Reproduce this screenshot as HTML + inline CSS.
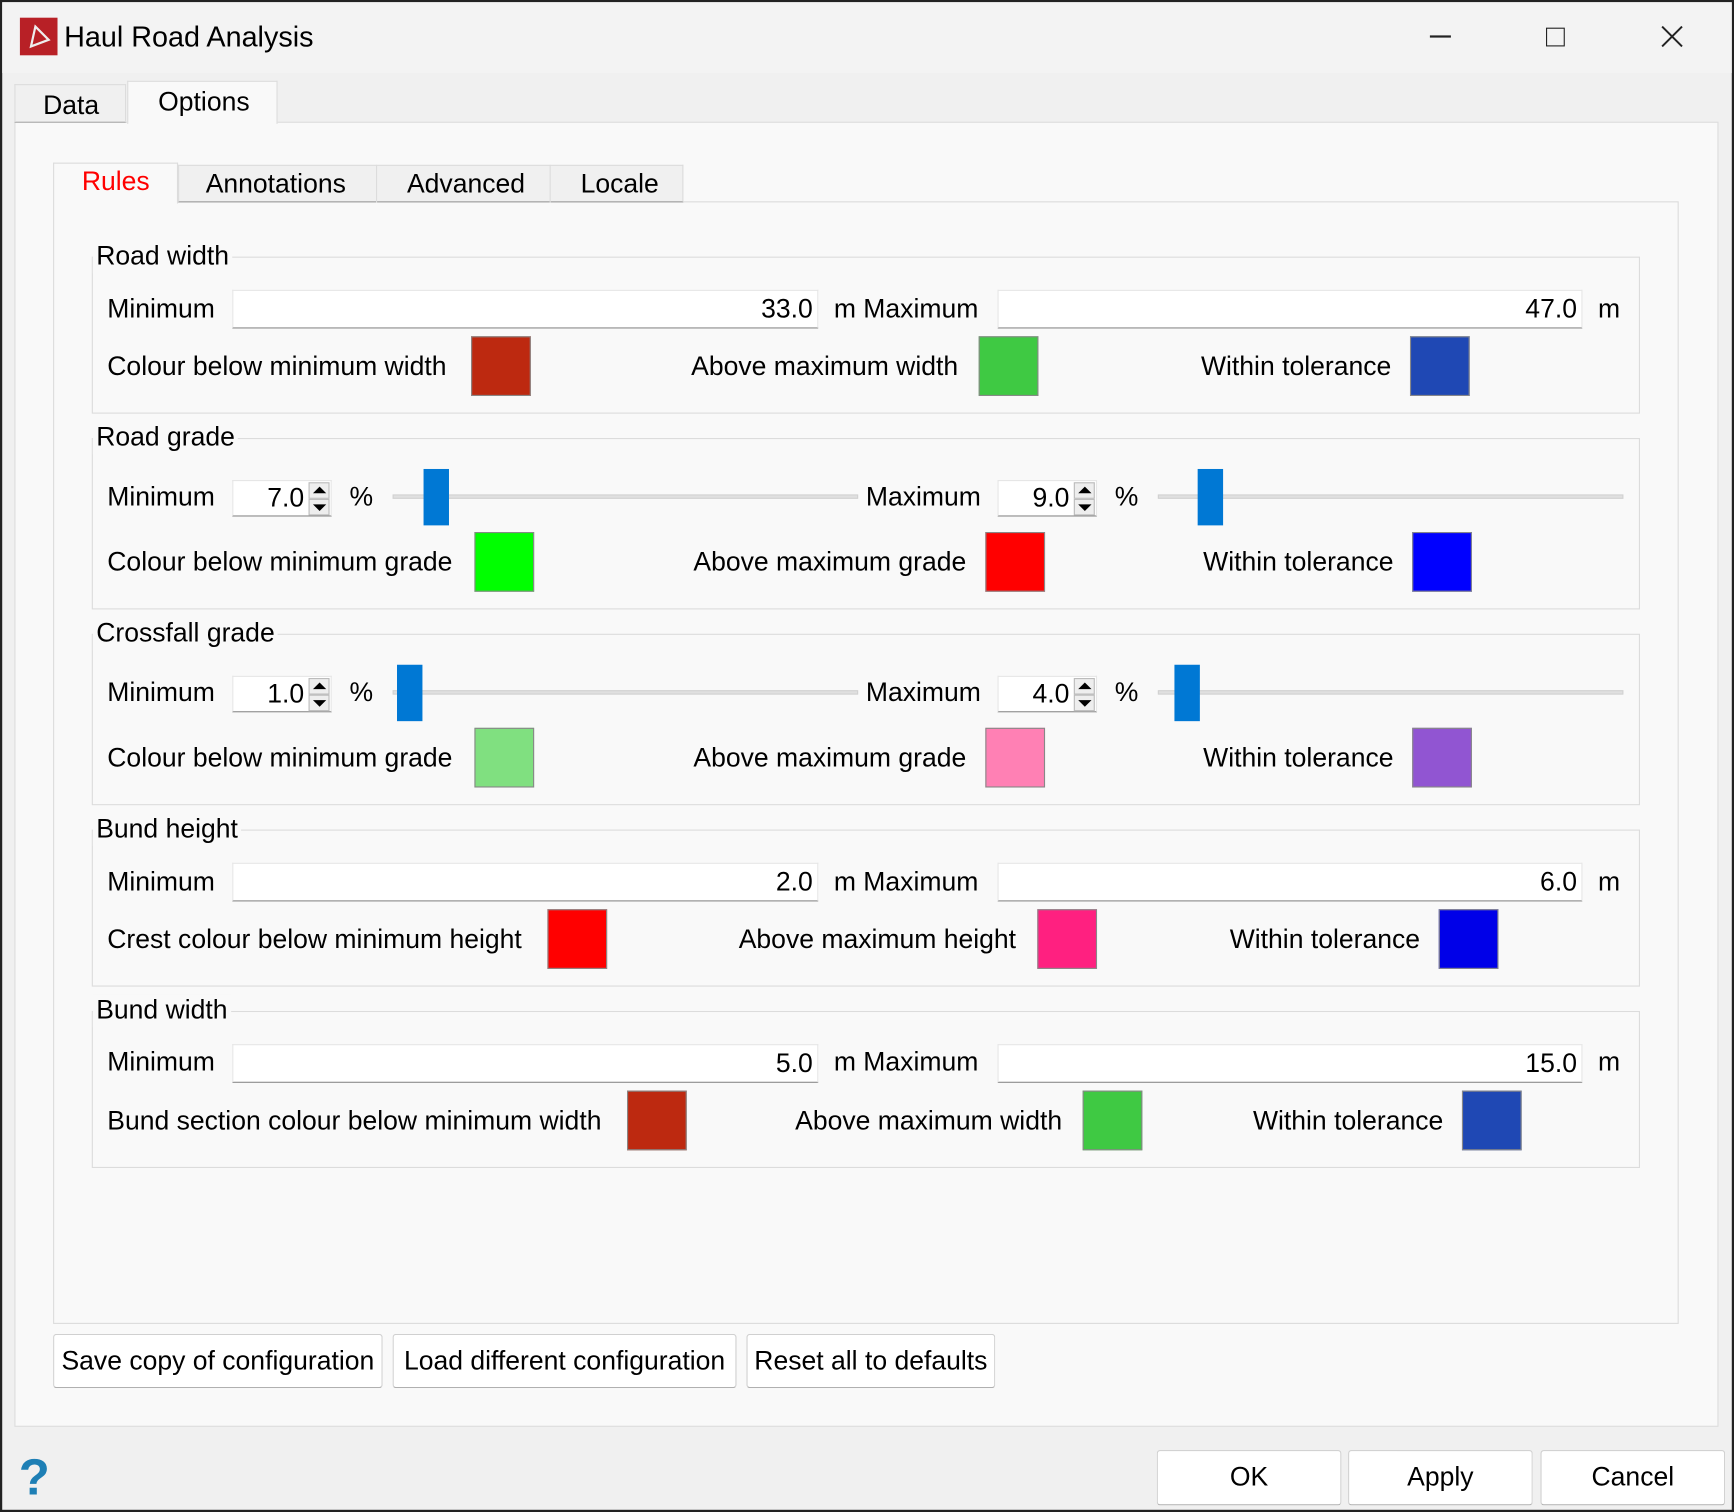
<!DOCTYPE html>
<html><head><meta charset="utf-8"><style>
html,body{margin:0;padding:0;width:1734px;height:1512px;overflow:hidden;background:#f0f0f0}
#w{position:absolute;left:0;top:0;width:1568px;height:1367px;transform:scale(1.10587,1.10607);transform-origin:0 0;font-family:"Liberation Sans",sans-serif;font-size:24px;color:#000;background:#f0f0f0}
.a{position:absolute}
.t{position:absolute;white-space:nowrap;line-height:30px}
.box{position:absolute;border:1px solid #dcdcdc}
.le{position:absolute;background:#fff;border:1px solid #e6e6e6;border-bottom:1px solid #8a8a8a;box-sizing:border-box;text-align:right;padding-right:4px;line-height:33px}
.sw{position:absolute;width:54px;height:54px;box-sizing:border-box;border:1px solid #888}
.btn{position:absolute;background:#fff;border:1px solid #d0d0d0;border-bottom-color:#b0b0b0;border-radius:3px;box-sizing:border-box;text-align:center;white-space:nowrap}
.gr{position:absolute;height:4px;background:#e0e0e0;border:1px solid #d2d2d2;box-sizing:border-box}
.hd{position:absolute;width:23px;height:51px;background:#0078d4}
.sp{position:absolute;width:90px;height:33px;background:#fff;border:1px solid #e6e6e6;border-bottom-color:#8a8a8a;box-sizing:border-box}
.sp span{position:absolute;right:24px;top:0;line-height:31px}
.ar{position:absolute;right:1px;width:19px;height:15px;background:#eee;border:1px solid #bbb;box-sizing:border-box}
.ar.u::after{content:"";position:absolute;left:3px;top:3px;border-left:6px solid transparent;border-right:6px solid transparent;border-bottom:6px solid #000}
.ar.d::after{content:"";position:absolute;left:3px;top:4px;border-left:6px solid transparent;border-right:6px solid transparent;border-top:6px solid #000}
</style></head><body><div id="w">
<div class="a" style="left:0;top:0;border:2px solid #222;box-sizing:border-box;width:1568px;height:1367px"></div>
<div class="a" style="left:2px;top:2px;width:1564px;height:64px;background:#f3f3f3"></div>
<div class="a" style="left:18px;top:16px;width:34px;height:34px;background:#b82026"></div>
<svg class="a" style="left:18px;top:16px" width="34" height="34"><path d="M14 8 L26 20 L10 26 Z" fill="none" stroke="#eee" stroke-width="2"/></svg>
<div class="t" style="left:58px;top:18px;font-size:26px">Haul Road Analysis</div>
<div class="a" style="left:1293px;top:32px;width:19px;height:2px;background:#222"></div>
<div class="a" style="left:1398px;top:25px;width:15px;height:15px;border:1.5px solid #222"></div>
<svg class="a" style="left:1502px;top:23px" width="20" height="20"><path d="M1 1L19 19M19 1L1 19" stroke="#222" stroke-width="1.8"/></svg>

<div class="a" style="left:13px;top:110px;width:1541px;height:1180px;background:#f9f9f9;border:1px solid #dcdcdc;box-sizing:border-box"></div>
<div class="a" style="left:13px;top:76px;width:101px;height:35px;background:#f0f0f0;border:1px solid #dcdcdc;border-bottom-color:#aaa;box-sizing:border-box"></div>
<div class="t" style="left:39px;top:81px">Data</div>
<div class="a" style="left:115px;top:73px;width:136px;height:39px;background:#f9f9f9;border:1px solid #dcdcdc;border-bottom:none;box-sizing:border-box"></div>
<div class="t" style="left:143px;top:78px">Options</div>

<div class="a" style="left:48px;top:182px;width:1470px;height:1015px;background:#f9f9f9;border:1px solid #dcdcdc;box-sizing:border-box"></div>
<div class="a" style="left:48px;top:147px;width:113px;height:37px;background:#f9f9f9;border:1px solid #dcdcdc;border-bottom:none;box-sizing:border-box"></div>
<div class="t" style="left:74px;top:150px;color:#f00">Rules</div>
<div class="a" style="left:161px;top:149px;width:457px;height:34px;background:#f0f0f0;border:1px solid #dcdcdc;border-bottom-color:#999;box-sizing:border-box"></div>
<div class="a" style="left:340px;top:149px;width:1px;height:34px;background:#dcdcdc"></div>
<div class="a" style="left:497px;top:149px;width:1px;height:34px;background:#dcdcdc"></div>
<div class="t" style="left:186px;top:152px">Annotations</div>
<div class="t" style="left:368px;top:152px">Advanced</div>
<div class="t" style="left:525px;top:152px">Locale</div>

<div class="box" style="left:83px;top:232px;width:1398px;height:140px"></div>
<div class="t" style="left:84px;top:217px;background:#f9f9f9;padding:0 3px">Road width</div>
<div class="t" style="left:97px;top:265px">Minimum</div>
<div class="le" style="left:210px;top:262px;width:530px;height:35px">33.0</div>
<div class="t" style="left:754px;top:265px">m Maximum</div>
<div class="le" style="left:902px;top:262px;width:529px;height:35px">47.0</div>
<div class="t" style="left:1445px;top:265px">m</div>
<div class="t" style="left:97px;top:317px">Colour below minimum width</div>
<div class="sw" style="left:426px;top:304px;background:#bd2910"></div>
<div class="t" style="left:625px;top:317px">Above maximum width</div>
<div class="sw" style="left:885px;top:304px;background:#3fc943"></div>
<div class="t" style="left:1086px;top:317px">Within tolerance</div>
<div class="sw" style="left:1275px;top:304px;background:#1f48b4"></div>

<div class="box" style="left:83px;top:396px;width:1398px;height:153px"></div>
<div class="t" style="left:84px;top:381px;background:#f9f9f9;padding:0 3px">Road grade</div>
<div class="t" style="left:97px;top:435px">Minimum</div>
<div class="sp" style="left:210px;top:434px"><span>7.0</span><div class="ar u" style="top:1px"></div><div class="ar d" style="top:16px"></div></div>
<div class="t" style="left:316px;top:435px">%</div>
<div class="gr" style="left:355px;top:447px;width:421px"></div>
<div class="hd" style="left:383px;top:424px"></div>
<div class="t" style="left:783px;top:435px">Maximum</div>
<div class="sp" style="left:902px;top:434px"><span>9.0</span><div class="ar u" style="top:1px"></div><div class="ar d" style="top:16px"></div></div>
<div class="t" style="left:1008px;top:435px">%</div>
<div class="gr" style="left:1047px;top:447px;width:421px"></div>
<div class="hd" style="left:1083px;top:424px"></div>
<div class="t" style="left:97px;top:494px">Colour below minimum grade</div>
<div class="sw" style="left:429px;top:481px;background:#00ff00"></div>
<div class="t" style="left:627px;top:494px">Above maximum grade</div>
<div class="sw" style="left:891px;top:481px;background:#ff0000"></div>
<div class="t" style="left:1088px;top:494px">Within tolerance</div>
<div class="sw" style="left:1277px;top:481px;background:#0000ff"></div>

<div class="box" style="left:83px;top:573px;width:1398px;height:153px"></div>
<div class="t" style="left:84px;top:558px;background:#f9f9f9;padding:0 3px">Crossfall grade</div>
<div class="t" style="left:97px;top:612px">Minimum</div>
<div class="sp" style="left:210px;top:611px"><span>1.0</span><div class="ar u" style="top:1px"></div><div class="ar d" style="top:16px"></div></div>
<div class="t" style="left:316px;top:612px">%</div>
<div class="gr" style="left:355px;top:624px;width:421px"></div>
<div class="hd" style="left:359px;top:601px"></div>
<div class="t" style="left:783px;top:612px">Maximum</div>
<div class="sp" style="left:902px;top:611px"><span>4.0</span><div class="ar u" style="top:1px"></div><div class="ar d" style="top:16px"></div></div>
<div class="t" style="left:1008px;top:612px">%</div>
<div class="gr" style="left:1047px;top:624px;width:421px"></div>
<div class="hd" style="left:1062px;top:601px"></div>
<div class="t" style="left:97px;top:671px">Colour below minimum grade</div>
<div class="sw" style="left:429px;top:658px;background:#80e080"></div>
<div class="t" style="left:627px;top:671px">Above maximum grade</div>
<div class="sw" style="left:891px;top:658px;background:#ff80b4"></div>
<div class="t" style="left:1088px;top:671px">Within tolerance</div>
<div class="sw" style="left:1277px;top:658px;background:#9155d2"></div>

<div class="box" style="left:83px;top:750px;width:1398px;height:140px"></div>
<div class="t" style="left:84px;top:735px;background:#f9f9f9;padding:0 3px">Bund height</div>
<div class="t" style="left:97px;top:783px">Minimum</div>
<div class="le" style="left:210px;top:780px;width:530px;height:35px">2.0</div>
<div class="t" style="left:754px;top:783px">m Maximum</div>
<div class="le" style="left:902px;top:780px;width:529px;height:35px">6.0</div>
<div class="t" style="left:1445px;top:783px">m</div>
<div class="t" style="left:97px;top:835px">Crest colour below minimum height</div>
<div class="sw" style="left:495px;top:822px;background:#ff0000"></div>
<div class="t" style="left:668px;top:835px">Above maximum height</div>
<div class="sw" style="left:938px;top:822px;background:#ff2080"></div>
<div class="t" style="left:1112px;top:835px">Within tolerance</div>
<div class="sw" style="left:1301px;top:822px;background:#0000e8"></div>

<div class="box" style="left:83px;top:914px;width:1398px;height:140px"></div>
<div class="t" style="left:84px;top:899px;background:#f9f9f9;padding:0 3px">Bund width</div>
<div class="t" style="left:97px;top:946px">Minimum</div>
<div class="le" style="left:210px;top:944px;width:530px;height:35px">5.0</div>
<div class="t" style="left:754px;top:946px">m Maximum</div>
<div class="le" style="left:902px;top:944px;width:529px;height:35px">15.0</div>
<div class="t" style="left:1445px;top:946px">m</div>
<div class="t" style="left:97px;top:999px">Bund section colour below minimum width</div>
<div class="sw" style="left:567px;top:986px;background:#bd2910"></div>
<div class="t" style="left:719px;top:999px">Above maximum width</div>
<div class="sw" style="left:979px;top:986px;background:#3fc943"></div>
<div class="t" style="left:1133px;top:999px">Within tolerance</div>
<div class="sw" style="left:1322px;top:986px;background:#1f48b4"></div>

<div class="btn" style="left:48px;top:1206px;width:298px;height:49px;line-height:47px">Save copy of configuration</div>
<div class="btn" style="left:355px;top:1206px;width:311px;height:49px;line-height:47px">Load different configuration</div>
<div class="btn" style="left:675px;top:1206px;width:225px;height:49px;line-height:47px">Reset all to defaults</div>

<div class="btn" style="left:1046px;top:1311px;width:167px;height:50px;line-height:48px">OK</div>
<div class="btn" style="left:1219px;top:1311px;width:167px;height:50px;line-height:48px">Apply</div>
<div class="btn" style="left:1393px;top:1311px;width:167px;height:50px;line-height:48px">Cancel</div>
<div class="t" style="left:17px;top:1312px;font-size:46px;font-weight:bold;color:#1e7fb5;line-height:46px">?</div>
</div></body></html>
